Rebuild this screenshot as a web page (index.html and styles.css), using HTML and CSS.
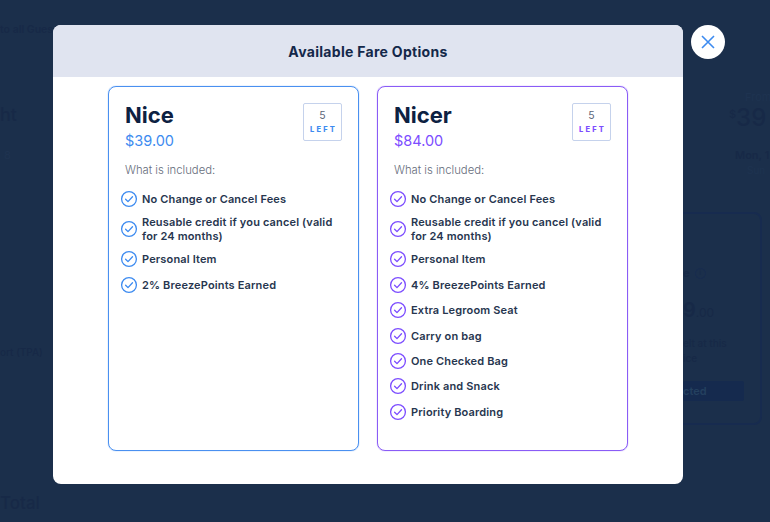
FILE: index.html
```html
<!DOCTYPE html>
<html lang="en">
<head>
<meta charset="utf-8">
<title>Available Fare Options</title>
<link rel="stylesheet" href="styles.css">
</head>
<body>
<div class="page">
  <div class="page-left">
    <p class="bg-note">to all Gues</p>
    <p class="bg-title">ht</p>
    <p class="bg-date">8</p>
    <p class="bg-airport">ort (TPA)</p>
    <p class="bg-total">Total</p>
  </div>
  <div class="page-right">
    <p class="bg-from">From</p>
    <p class="bg-price"><sup>$</sup>39</p>
    <p class="bg-day">Mon, 1</p>
    <p class="bg-sun">Sun</p>
    <div class="bg-card">
      <p class="bg-card-name">e <span class="bg-info">i</span></p>
      <p class="bg-card-price">9<span>.00</span></p>
      <p class="bg-card-text">elt at this<br>ice</p>
      <div class="bg-card-btn">cted</div>
    </div>
  </div>
</div>

<div class="overlay">
  <section class="modal">
    <header class="modal-head">Available Fare Options</header>
    <div class="fares">
      <article class="fare fare-nice">
        <div class="fare-top">
          <div>
            <h2 class="fare-name">Nice</h2>
            <p class="fare-price">$39.00</p>
          </div>
          <div class="seats"><span class="seats-num">5</span><span class="seats-left">LEFT</span></div>
        </div>
        <p class="included">What is included:</p>
        <ul class="perks">
          <li class="perk"><svg class="check" viewBox="0 0 18 18"><circle cx="9" cy="9" r="7.4"/><path d="M5.6 9.2l2.4 2.4 4.5-4.9"/></svg><span>No Change or Cancel Fees</span></li>
          <li class="perk"><svg class="check" viewBox="0 0 18 18"><circle cx="9" cy="9" r="7.4"/><path d="M5.6 9.2l2.4 2.4 4.5-4.9"/></svg><span>Reusable credit if you cancel (valid for 24 months)</span></li>
          <li class="perk"><svg class="check" viewBox="0 0 18 18"><circle cx="9" cy="9" r="7.4"/><path d="M5.6 9.2l2.4 2.4 4.5-4.9"/></svg><span>Personal Item</span></li>
          <li class="perk"><svg class="check" viewBox="0 0 18 18"><circle cx="9" cy="9" r="7.4"/><path d="M5.6 9.2l2.4 2.4 4.5-4.9"/></svg><span>2% BreezePoints Earned</span></li>
        </ul>
      </article>
      <article class="fare fare-nicer">
        <div class="fare-top">
          <div>
            <h2 class="fare-name">Nicer</h2>
            <p class="fare-price">$84.00</p>
          </div>
          <div class="seats"><span class="seats-num">5</span><span class="seats-left">LEFT</span></div>
        </div>
        <p class="included">What is included:</p>
        <ul class="perks">
          <li class="perk"><svg class="check" viewBox="0 0 18 18"><circle cx="9" cy="9" r="7.4"/><path d="M5.6 9.2l2.4 2.4 4.5-4.9"/></svg><span>No Change or Cancel Fees</span></li>
          <li class="perk"><svg class="check" viewBox="0 0 18 18"><circle cx="9" cy="9" r="7.4"/><path d="M5.6 9.2l2.4 2.4 4.5-4.9"/></svg><span>Reusable credit if you cancel (valid for 24 months)</span></li>
          <li class="perk"><svg class="check" viewBox="0 0 18 18"><circle cx="9" cy="9" r="7.4"/><path d="M5.6 9.2l2.4 2.4 4.5-4.9"/></svg><span>Personal Item</span></li>
          <li class="perk"><svg class="check" viewBox="0 0 18 18"><circle cx="9" cy="9" r="7.4"/><path d="M5.6 9.2l2.4 2.4 4.5-4.9"/></svg><span>4% BreezePoints Earned</span></li>
          <li class="perk"><svg class="check" viewBox="0 0 18 18"><circle cx="9" cy="9" r="7.4"/><path d="M5.6 9.2l2.4 2.4 4.5-4.9"/></svg><span>Extra Legroom Seat</span></li>
          <li class="perk"><svg class="check" viewBox="0 0 18 18"><circle cx="9" cy="9" r="7.4"/><path d="M5.6 9.2l2.4 2.4 4.5-4.9"/></svg><span>Carry on bag</span></li>
          <li class="perk"><svg class="check" viewBox="0 0 18 18"><circle cx="9" cy="9" r="7.4"/><path d="M5.6 9.2l2.4 2.4 4.5-4.9"/></svg><span>One Checked Bag</span></li>
          <li class="perk"><svg class="check" viewBox="0 0 18 18"><circle cx="9" cy="9" r="7.4"/><path d="M5.6 9.2l2.4 2.4 4.5-4.9"/></svg><span>Drink and Snack</span></li>
          <li class="perk"><svg class="check" viewBox="0 0 18 18"><circle cx="9" cy="9" r="7.4"/><path d="M5.6 9.2l2.4 2.4 4.5-4.9"/></svg><span>Priority Boarding</span></li>
        </ul>
      </article>
    </div>
  </section>
  <button class="close" aria-label="Close">
    <svg viewBox="0 0 16 16" class="close-icon"><path d="M2 2l12 12M14 2L2 14"/></svg>
  </button>
</div>
</body>
</html>
```
FILE: styles.css
```css
* { box-sizing: border-box; }
html, body { margin: 0; height: 100%; overflow: hidden; }
body {
  width: 770px;
  height: 522px;
  position: relative;
  background: #1b2f4b;
  font-family: "Inter", "Liberation Sans", sans-serif;
  color: #172a49;
}
p, h2, ul { margin: 0; padding: 0; }

/* dimmed page behind the dialog */
.page {
  display: flex;
  justify-content: space-between;
  height: 522px;
  color: #172947;
  overflow: hidden;
}
.page-left { width: 53px; display: flex; flex-direction: column; white-space: nowrap; font-weight: 600; }
.page-right { width: 130px; padding-top: 89px; white-space: nowrap; flex: none; }
.bg-note { font-size: 10.5px; margin-top: 23px; line-height: 14px; }
.bg-title { font-size: 18px; margin-top: 66px; line-height: 24px; font-weight: 500; }
.bg-date { font-size: 11px; margin-top: 21px; margin-left: 4px; color: #1f3350; line-height: 14px; font-weight: 400; }
.bg-airport { font-size: 10px; margin-top: 183px; line-height: 14px; font-weight: 500; }
.bg-total { font-size: 17px; margin-top: 132px; line-height: 24px; font-weight: 500; }
.bg-from { font-size: 11px; line-height: 16px; margin-left: 105px; color: #1e3350; }
.bg-price { font-size: 24px; line-height: 28px; margin-top: -1px; margin-left: 89px; font-weight: 500; }
.bg-price sup { font-size: 11px; vertical-align: 8px; line-height: 0; }
.bg-day { font-size: 11px; font-weight: 600; line-height: 16px; margin-left: 95px; margin-top: 15px; }
.bg-sun { font-size: 10px; line-height: 14px; margin-left: 107px; color: #1e3350; }
.bg-card {
  margin-top: 35px;
  width: 122px;
  height: 213px;
  border: 2px solid #172b4f;
  border-radius: 8px;
  padding: 52px 16px 0 41px;
}
.bg-card-name { font-size: 11px; font-weight: 700; display: flex; align-items: center; gap: 5px; line-height: 14px; }
.bg-info { width: 11px; height: 11px; border: 1px solid #172b4f; border-radius: 50%; font-size: 7px; display: flex; align-items: center; justify-content: center; font-weight: 400; }
.bg-card-price { font-size: 20px; font-weight: 600; margin-top: 17px; line-height: 26px; }
.bg-card-price span { font-size: 12px; font-weight: 400; }
.bg-card-text { font-size: 10px; line-height: 15px; margin-top: 10px; font-weight: 500; }
.bg-card-btn { margin-top: 15px; height: 20px; background: #152a4e; border-radius: 2px; font-size: 11px; font-weight: 600; line-height: 20px; color: #24405f; }

/* dialog */
.overlay {
  position: absolute;
  inset: 0;
  padding: 25px 0 0 53px;
  display: flex;
  align-items: flex-start;
  gap: 8px;
}
.modal {
  width: 630px;
  height: 459px;
  background: #fff;
  border-radius: 8px;
  overflow: hidden;
  flex: none;
}
.modal-head {
  height: 52px;
  background: #e0e4f0;
  display: flex;
  align-items: center;
  justify-content: center;
  font-size: 14px;
  font-weight: 700;
  letter-spacing: 0.3px;
  color: #14284a;
}
.fares {
  display: flex;
  gap: 18px;
  padding: 9px 55px 0;
}
.fare {
  width: 251px;
  height: 365px;
  border: 1px solid;
  border-radius: 8px;
  padding: 15px 16px 0;
}
.fare-nice { border-color: #4a90f0; --accent: #3d8bf0; box-shadow: 0 0 1px #4a90f0; }
.fare-nicer { border-color: #8a5cf6; --accent: #7c4dff; box-shadow: 0 0 1px #8a5cf6; }
.fare-top { display: flex; justify-content: space-between; align-items: flex-start; }
.fare-name {
  font-size: 22px;
  font-weight: 700;
  line-height: 26px;
  color: #0d2142;
}
.fare-price {
  font-size: 14.5px;
  line-height: 20px;
  margin-top: 3px;
  color: var(--accent);
}
.seats {
  width: 39px;
  height: 38px;
  margin-top: 1px;
  border: 1px solid #c5d2ec;
  border-radius: 2px;
  display: flex;
  flex-direction: column;
  align-items: center;
  justify-content: center;
  gap: 2px;
}
.seats-num { font-size: 10.5px; line-height: 14px; color: #5b6578; }
.seats-left { font-size: 7.5px; font-weight: 800; letter-spacing: 2.2px; margin-right: -2px; line-height: 10px; color: var(--accent); }
.included {
  font-size: 11.3px;
  font-weight: 300;
  line-height: 16px;
  margin-top: 11px;
  color: #666d7b;
}
.perks {
  list-style: none;
  margin: 11.6px 0 0 -5px;
  display: flex;
  flex-direction: column;
  gap: 7.4px;
}
.perk {
  display: flex;
  align-items: center;
  gap: 4px;
  font-size: 11px;
  font-weight: 600;
  line-height: 14px;
  letter-spacing: 0.15px;
  color: #27364f;
}
.check {
  width: 18px;
  height: 18px;
  flex: none;
  fill: none;
  stroke: var(--accent);
  stroke-width: 1.3;
  stroke-linecap: round;
  stroke-linejoin: round;
}

/* close */
.close {
  width: 34px;
  height: 34px;
  border: 0;
  border-radius: 50%;
  background: #fff;
  padding: 0;
  display: flex;
  align-items: center;
  justify-content: center;
  flex: none;
}
.close-icon {
  width: 16px;
  height: 16px;
  fill: none;
  stroke: #3d8bf0;
  stroke-width: 1.6;
}
```
